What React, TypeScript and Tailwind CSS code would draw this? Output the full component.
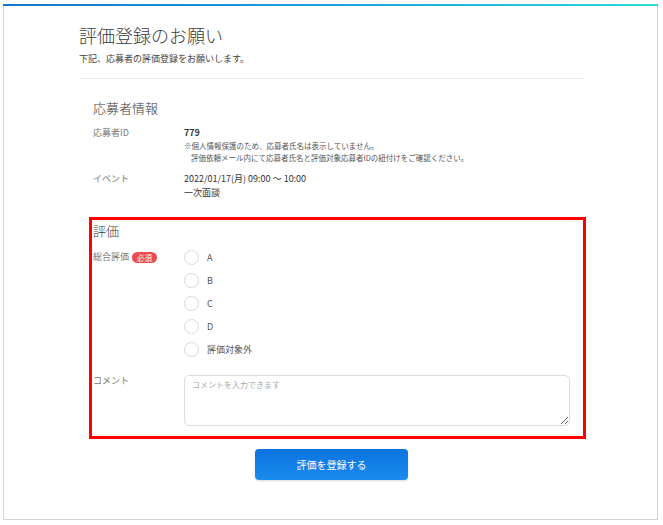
const font = { fontFamily: '"Noto Sans CJK JP", "Noto Sans", sans-serif' };

const ratings = ['A', 'B', 'C', 'D', '評価対象外'];

const Radio = ({ label }: { label: string }) => (
  <label className="flex items-center h-[15px] gap-[8px] cursor-pointer">
    <span className="w-[15px] h-[15px] rounded-full border-[1.5px] border-[#d3dbe3] bg-white shrink-0"></span>
    <span className="text-[9px] text-[#555] leading-[14px]">{label}</span>
  </label>
);

export default function App() {
  return (
    <div className="bg-white min-h-[525px] pl-[3px] pt-[4px]" style={font}>
      <div className="w-[655px] h-[516px] border-x border-b border-[#d4d4d4] relative">
        {/* top gradient line */}
        <div className="h-[2px] -mx-px bg-gradient-to-r from-[#1376d2] via-[#1aa0df] to-[#2ddbd3]"></div>

        <div className="pl-[75px] w-[580px]">
          <h1 className="pt-[17px] text-[18px] leading-[24px] text-[#3a3a3a] font-light">評価登録のお願い</h1>
          <p className="mt-[5px] text-[9px] leading-[14px] text-[#444]">下記、応募者の評価登録をお願いします。</p>
          <div className="mt-[12px] border-t border-[#eeeeee] w-[505px]"></div>

          {/* 応募者情報 */}
          <section className="pl-[14px]">
            <h2 className="mt-[20px] text-[13px] leading-[18px] text-[#3a3a3a] font-light">応募者情報</h2>
            <div className="mt-[9px] flex">
              <div className="w-[91px] text-[9px] leading-[14px] text-[#777]">応募者ID</div>
              <div>
                <div className="text-[9px] leading-[14px] font-bold text-[#333]">779</div>
                <p className="text-[7.5px] leading-[12px] text-[#555]">※個人情報保護のため、応募者氏名は表示していません。</p>
                <p className="text-[7.5px] leading-[12px] text-[#555] pl-[7px]">評価依頼メール内にて応募者氏名と評価対象応募者IDの紐付けをご確認ください。</p>
              </div>
            </div>
            <div className="mt-[8px] flex">
              <div className="w-[91px] text-[9px] leading-[14px] text-[#777]">イベント</div>
              <div className="text-[9px] leading-[14px] text-[#333]">
                <div>2022/01/17(月) 09:00 ～ 10:00</div>
                <div>一次面談</div>
              </div>
            </div>
          </section>

          {/* 評価 */}
          <section className="mt-[17px] ml-[10px] w-[497px] border-[3px] border-[#ff0000] pl-[1px] pt-[2px] pb-[10px]">
            <h2 className="text-[13px] leading-[18px] text-[#3a3a3a] font-light">評価</h2>
            <div className="mt-[10px] flex">
              <div className="w-[91px] flex items-start gap-[3px]">
                <span className="text-[9px] leading-[14px] text-[#777]">総合評価</span>
                <span className="mt-[2px] h-[11px] px-[5px] rounded-full bg-[#ea4a4c] text-white text-[7.5px] leading-[11px]">必須</span>
              </div>
              <div className="flex flex-col gap-[8px]">
                {ratings.map((r) => (
                  <Radio key={r} label={r} />
                ))}
              </div>
            </div>
            <div className="mt-[18px] flex">
              <div className="w-[91px] text-[9px] leading-[14px] text-[#777] -mt-[1px]">コメント</div>
              <textarea
                className="w-[386px] h-[51px] border border-[#d6dde5] rounded-[5px] px-[7px] py-[3px] text-[8px] leading-[12px] text-[#333] placeholder:text-[#aaa] outline-none"
                placeholder="コメントを入力できます"
                style={font}
              ></textarea>
            </div>
          </section>

          <div className="mt-[10px] w-[505px] flex justify-center">
            <button className="w-[153px] h-[31px] rounded-[4px] bg-gradient-to-b from-[#0a72df] to-[#1b8cef] text-white text-[10px] shadow-[0_1px_2px_rgba(0,0,0,0.15)]">
              評価を登録する
            </button>
          </div>
        </div>
      </div>
    </div>
  );
}
